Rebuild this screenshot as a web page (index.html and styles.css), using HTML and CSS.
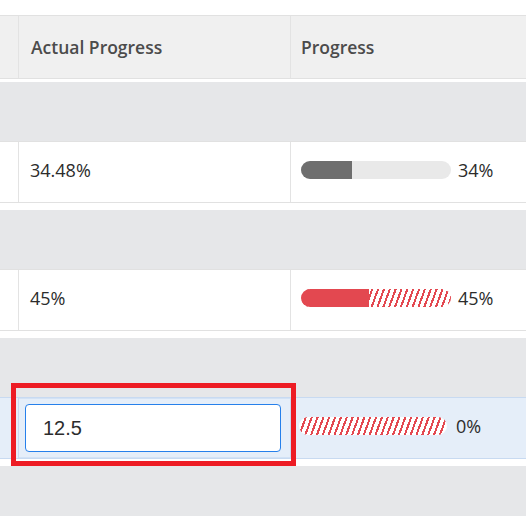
FILE: index.html
```html
<!DOCTYPE html>
<html lang="en">
<head>
<meta charset="utf-8">
<title>Progress grid</title>
<link rel="stylesheet" href="styles.css">
</head>
<body>
<div class="page">
  <div class="grid">
    <div class="row header">
      <div class="cell c0"></div>
      <div class="cell c1">Actual Progress</div>
      <div class="cell c2">Progress</div>
    </div>
    <div class="group first"></div>
    <div class="row data">
      <div class="cell c0"></div>
      <div class="cell c1">34.48%</div>
      <div class="cell c2">
        <div class="bar"><div class="fill neutral" style="width:34%"></div></div>
        <span class="pct">34%</span>
      </div>
    </div>
    <div class="group"></div>
    <div class="row data">
      <div class="cell c0"></div>
      <div class="cell c1">45%</div>
      <div class="cell c2">
        <div class="bar striped"><div class="fill negative" style="width:45%"></div></div>
        <span class="pct">45%</span>
      </div>
    </div>
    <div class="group"></div>
    <div class="row data selected">
      <div class="cell c0"></div>
      <div class="cell c1 editing">
        <input class="editor" type="text" value="12.5">
      </div>
      <div class="cell c2">
        <div class="bar striped"><div class="fill negative" style="width:0%"></div></div>
        <span class="pct">0%</span>
      </div>
    </div>
    <div class="group last"></div>
  </div>
  <div class="annotation"></div>
</div>
</body>
</html>
```

FILE: styles.css
```css
* {
  box-sizing: border-box;
}

html, body {
  margin: 0;
  padding: 0;
  background: #ffffff;
}

.page {
  position: relative;
  width: 526px;
  height: 516px;
  overflow: hidden;
  font-family: "Open Sans", "Noto Sans", sans-serif;
}

.grid {
  display: flex;
  flex-direction: column;
  padding-top: 15px;
}

.row {
  display: grid;
  grid-template-columns: 19px 272px 1fr;
  height: 62px;
  border-top: 1px solid #e1e1e1;
  border-bottom: 1px solid #e1e1e1;
}

.cell {
  display: flex;
  align-items: center;
  min-width: 0;
}

.c0,
.c1 {
  border-right: 1px solid #e3e3e3;
}

.header {
  height: 64px;
  background: #f0f0f0;
  margin-bottom: 3px;
}

.header .cell {
  font-size: 17.5px;
  font-weight: 600;
  color: #4b4b4b;
}

.header .c1 {
  padding-left: 12px;
}

.header .c2 {
  padding-left: 10px;
}

.group {
  height: 59px;
  background: #e6e7e9;
}

.group.last {
  height: 60px;
}

.data {
  background: #ffffff;
  margin-bottom: 7px;
  font-size: 18px;
  color: #2c2c2c;
}

.data .cell {
  padding-bottom: 5px;
}

.data .c1 {
  padding-left: 11px;
}

.data .c2 {
  padding-left: 10px;
  gap: 7px;
}

.bar {
  width: 150px;
  height: 18px;
  border-radius: 9px;
  background: #e9e9e9;
  overflow: hidden;
  flex: none;
}

.bar.striped {
  background: repeating-linear-gradient(110deg, #e34850 0 2px, #ffffff 2px 5.5px);
}

.fill {
  height: 100%;
}

.fill.neutral {
  background: #6e6e6e;
}

.fill.negative {
  background: #e34850;
}

.pct {
  line-height: 1;
}

.selected {
  background: #e5eef9;
  border-top-color: #c8daf1;
  border-bottom-color: #c8daf1;
}

.selected .c0,
.selected .c1 {
  border-right-color: #c8daf1;
}

.selected .c1.editing {
  padding-left: 6px;
  padding-bottom: 0;
  border-top: 1px solid #d2e2f5;
  border-bottom: 1px solid #d2e2f5;
}

.selected .c2 {
  padding-left: 8px;
  gap: 9px;
}

.selected .bar {
  width: 148px;
}

.editor {
  width: 256px;
  height: 48px;
  margin: 0;
  padding: 0 0 0 17px;
  border: 1px solid #2680eb;
  border-radius: 4px;
  background: #ffffff;
  font-family: "Liberation Sans", Arial, sans-serif;
  font-size: 20px;
  color: #2c2c2c;
  outline: none;
}

.annotation {
  position: absolute;
  left: 11px;
  top: 383px;
  width: 285px;
  height: 83px;
  border: 5px solid #ed1c24;
  pointer-events: none;
}
```
